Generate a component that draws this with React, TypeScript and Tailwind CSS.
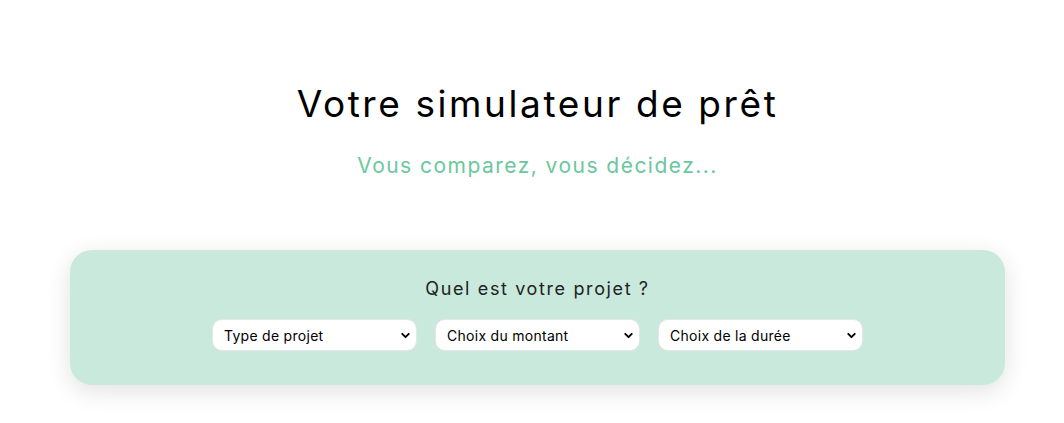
import { ChevronDown } from "lucide-react";

const fields = ["Type de projet", "Choix du montant", "Choix de la durée"];

function Select({ label }: { label: string }) {
  return (
    <div className="flex h-[32px] w-[205px] items-center justify-between rounded-[10px] border border-[#e6e6e6] bg-white pl-[11px] pr-[4px]">
      <span className="text-[14px] tracking-[0.02em] text-black">{label}</span>
      <ChevronDown className="h-[13px] w-[13px] text-black" strokeWidth={3.5} />
    </div>
  );
}

export default function App() {
  return (
    <div
      className="min-h-[423px] bg-white pl-[70px] pt-[80px]"
      style={{ fontFamily: "Inter, 'Noto Sans', sans-serif" }}
    >
      <div className="w-[935px]">
        <h1 className="text-center text-[37px] leading-[48px] font-normal tracking-[0.07em] text-black">
          Votre simulateur de prêt
        </h1>
        <p className="mt-[24px] text-center text-[21px] leading-[28px] tracking-[0.07em] text-[#6cc79e]">
          Vous comparez, vous décidez...
        </p>
        <div className="mt-[70px] flex h-[135px] flex-col items-center rounded-[22px] bg-[#c8e9dc] pt-[27px] shadow-[0_6px_24px_rgba(0,0,0,0.12)]">
          <h2 className="text-[18px] leading-[24px] tracking-[0.09em] text-[#222]">Quel est votre projet ?</h2>
          <div className="mt-[18px] flex gap-[18px]">
            {fields.map((f) => (
              <Select key={f} label={f} />
            ))}
          </div>
        </div>
      </div>
    </div>
  );
}
